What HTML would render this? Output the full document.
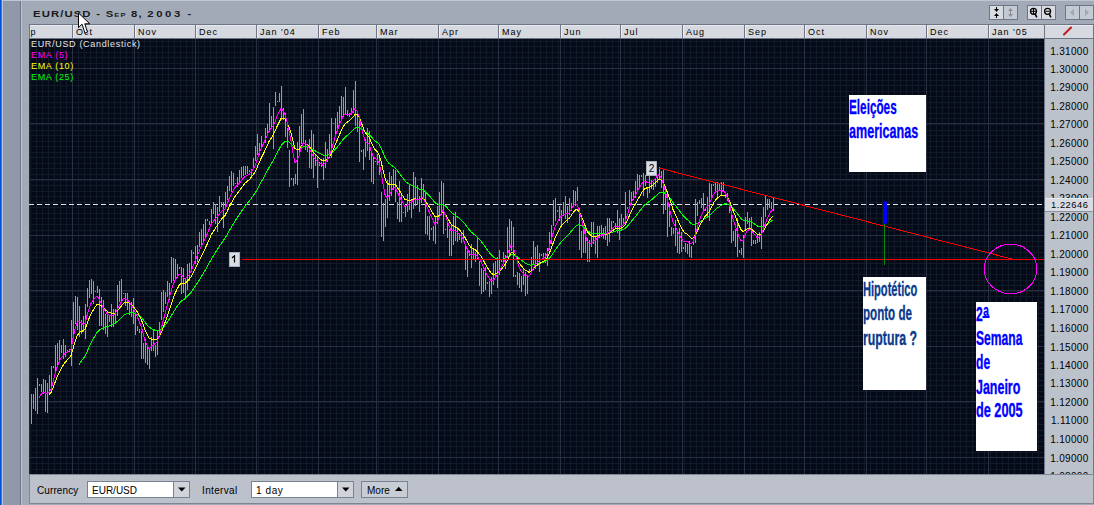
<!DOCTYPE html>
<html><head><meta charset="utf-8">
<style>
*{margin:0;padding:0;box-sizing:border-box}
html,body{width:1094px;height:505px;overflow:hidden;background:#a2aab8;font-family:"Liberation Sans",sans-serif;}
.a{position:absolute}
.hc{position:absolute;top:24px;height:15px;background:#d6dae0;border-top:1px solid #6e7686;border-bottom:1px solid #6e7686;font-size:10px;letter-spacing:0.6px;color:#000;padding-left:3px;line-height:13px}
.sep{position:absolute;top:24px;width:1px;height:15px;background:#6e7686}
.pl{position:absolute;left:1045px;width:43.5px;text-align:right;font-size:10px;letter-spacing:0.3px;line-height:12px;color:#000}
.leg{position:absolute;left:31px;font-size:9px;letter-spacing:0.68px;line-height:11px}
.box{position:absolute;background:#fff}
.bt{position:absolute;-webkit-text-stroke:0.35px currentColor;font-family:"Liberation Sans",sans-serif;font-weight:bold;font-size:20.5px;line-height:24.1px;transform:scaleX(0.59);transform-origin:0 0;white-space:nowrap}
.btn{position:absolute;top:5px;height:15px;border:1px solid #6e7686;}
</style></head><body>
<!-- left frame -->
<div class="a" style="left:0;top:0;width:1px;height:505px;background:#0050e0"></div>
<div class="a" style="left:1px;top:0;width:1px;height:505px;background:#6c7078"></div>
<div class="a" style="left:2px;top:0;width:1px;height:505px;background:#bec5d0"></div>
<div class="a" style="left:3px;top:1px;width:17px;height:504px;background:#8f99a9"></div>
<div class="a" style="left:20px;top:0;width:1px;height:505px;background:#6e7686"></div>
<div class="a" style="left:21px;top:0;width:1px;height:505px;background:#bcc3ce"></div>
<div class="a" style="left:2px;top:0;width:1092px;height:1px;background:#c0c6d0"></div>

<!-- title -->
<div class="a" style="left:33px;top:9px;font-size:9.2px;line-height:11px;font-weight:bold;font-variant:small-caps;letter-spacing:0.9px;word-spacing:0.3px;color:#1a1a1a;transform:scaleX(1.23);transform-origin:0 0;white-space:nowrap">EUR/USD - Sep 8, <span style="letter-spacing:2.1px">2003</span> -</div>

<!-- toolbar buttons -->
<div class="btn" style="left:989px;width:29px;background:#c4cad4"></div>
<div class="a" style="left:990px;top:6px;width:13px;height:13px;background:#d8dce2"></div>
<div class="a" style="left:1003px;top:5px;width:1px;height:15px;background:#6e7686"></div>
<div class="btn" style="left:1027px;width:29px;background:#d8dce2"></div>
<div class="a" style="left:1041px;top:5px;width:1px;height:15px;background:#6e7686"></div>
<div class="btn" style="left:1065px;width:29px;background:#c4cad4"></div>
<div class="a" style="left:1079px;top:5px;width:1px;height:15px;background:#6e7686"></div>
<svg class="a" style="left:0;top:0" width="1094" height="30">
<g fill="#000"><rect x="996" y="7" width="1" height="4"/><path d="M994 9h5l-2.5 3z"/><path d="M994 16h5l-2.5-3z"/><rect x="996" y="15" width="1" height="3"/></g>
<g fill="#909090"><rect x="1010" y="9" width="1" height="7"/><path d="M1008 11h5l-2.5-3z"/><path d="M1008 14h5l-2.5 3z"/></g>
<g fill="none" stroke="#000" stroke-width="1.3"><circle cx="1033.5" cy="11.3" r="3"/><circle cx="1047.6" cy="11.3" r="3"/></g>
<g stroke="#000" stroke-width="1"><path d="M1033.5 8.5v5.5M1030.8 11.3h5.5M1045.5 11.3h4.3"/></g>
<g stroke="#000" stroke-width="1.6"><path d="M1035.2 14l1.6 3.3M1049.3 14l1.6 3.3"/></g>
<g fill="#a0a8b4"><path d="M1070 12.5l4-3.8v7.6z"/><path d="M1089 12.5l-4-3.8v7.6z"/></g>
</svg>

<!-- header row -->
<div class="a" style="left:29px;top:24px;width:1065px;height:15px;background:#d6dae0;border-top:1px solid #6e7686;border-bottom:1px solid #6e7686;border-left:1px solid #6e7686;border-right:1px solid #6e7686"></div>
<div class="a" style="left:30px;top:25px;width:1063px;height:1px;background:#e6e9ee"></div>
<div class="a" style="left:30px;top:26.5px;font-size:9px;letter-spacing:1px;line-height:11px;width:42px;overflow:hidden;white-space:nowrap"><span style="position:relative;left:-12.5px">Sep</span></div>
<div class="a" style="left:72px;top:25px;width:1px;height:13px;background:#6e7686"></div>
<div class="a" style="left:73px;top:25px;width:1px;height:13px;background:#eceef2"></div>
<div class="a" style="left:76px;top:26.5px;font-size:9px;letter-spacing:1px;line-height:11px;white-space:nowrap">Oct</div>
<div class="a" style="left:134px;top:25px;width:1px;height:13px;background:#6e7686"></div>
<div class="a" style="left:135px;top:25px;width:1px;height:13px;background:#eceef2"></div>
<div class="a" style="left:138px;top:26.5px;font-size:9px;letter-spacing:1px;line-height:11px;white-space:nowrap">Nov</div>
<div class="a" style="left:195px;top:25px;width:1px;height:13px;background:#6e7686"></div>
<div class="a" style="left:196px;top:25px;width:1px;height:13px;background:#eceef2"></div>
<div class="a" style="left:199px;top:26.5px;font-size:9px;letter-spacing:1px;line-height:11px;white-space:nowrap">Dec</div>
<div class="a" style="left:256px;top:25px;width:1px;height:13px;background:#6e7686"></div>
<div class="a" style="left:257px;top:25px;width:1px;height:13px;background:#eceef2"></div>
<div class="a" style="left:260px;top:26.5px;font-size:9px;letter-spacing:1px;line-height:11px;white-space:nowrap">Jan '04</div>
<div class="a" style="left:318px;top:25px;width:1px;height:13px;background:#6e7686"></div>
<div class="a" style="left:319px;top:25px;width:1px;height:13px;background:#eceef2"></div>
<div class="a" style="left:322px;top:26.5px;font-size:9px;letter-spacing:1px;line-height:11px;white-space:nowrap">Feb</div>
<div class="a" style="left:376px;top:25px;width:1px;height:13px;background:#6e7686"></div>
<div class="a" style="left:377px;top:25px;width:1px;height:13px;background:#eceef2"></div>
<div class="a" style="left:380px;top:26.5px;font-size:9px;letter-spacing:1px;line-height:11px;white-space:nowrap">Mar</div>
<div class="a" style="left:438px;top:25px;width:1px;height:13px;background:#6e7686"></div>
<div class="a" style="left:439px;top:25px;width:1px;height:13px;background:#eceef2"></div>
<div class="a" style="left:442px;top:26.5px;font-size:9px;letter-spacing:1px;line-height:11px;white-space:nowrap">Apr</div>
<div class="a" style="left:498px;top:25px;width:1px;height:13px;background:#6e7686"></div>
<div class="a" style="left:499px;top:25px;width:1px;height:13px;background:#eceef2"></div>
<div class="a" style="left:502px;top:26.5px;font-size:9px;letter-spacing:1px;line-height:11px;white-space:nowrap">May</div>
<div class="a" style="left:560px;top:25px;width:1px;height:13px;background:#6e7686"></div>
<div class="a" style="left:561px;top:25px;width:1px;height:13px;background:#eceef2"></div>
<div class="a" style="left:564px;top:26.5px;font-size:9px;letter-spacing:1px;line-height:11px;white-space:nowrap">Jun</div>
<div class="a" style="left:620px;top:25px;width:1px;height:13px;background:#6e7686"></div>
<div class="a" style="left:621px;top:25px;width:1px;height:13px;background:#eceef2"></div>
<div class="a" style="left:624px;top:26.5px;font-size:9px;letter-spacing:1px;line-height:11px;white-space:nowrap">Jul</div>
<div class="a" style="left:682px;top:25px;width:1px;height:13px;background:#6e7686"></div>
<div class="a" style="left:683px;top:25px;width:1px;height:13px;background:#eceef2"></div>
<div class="a" style="left:686px;top:26.5px;font-size:9px;letter-spacing:1px;line-height:11px;white-space:nowrap">Aug</div>
<div class="a" style="left:744px;top:25px;width:1px;height:13px;background:#6e7686"></div>
<div class="a" style="left:745px;top:25px;width:1px;height:13px;background:#eceef2"></div>
<div class="a" style="left:748px;top:26.5px;font-size:9px;letter-spacing:1px;line-height:11px;white-space:nowrap">Sep</div>
<div class="a" style="left:804px;top:25px;width:1px;height:13px;background:#6e7686"></div>
<div class="a" style="left:805px;top:25px;width:1px;height:13px;background:#eceef2"></div>
<div class="a" style="left:808px;top:26.5px;font-size:9px;letter-spacing:1px;line-height:11px;white-space:nowrap">Oct</div>
<div class="a" style="left:866px;top:25px;width:1px;height:13px;background:#6e7686"></div>
<div class="a" style="left:867px;top:25px;width:1px;height:13px;background:#eceef2"></div>
<div class="a" style="left:870px;top:26.5px;font-size:9px;letter-spacing:1px;line-height:11px;white-space:nowrap">Nov</div>
<div class="a" style="left:926px;top:25px;width:1px;height:13px;background:#6e7686"></div>
<div class="a" style="left:927px;top:25px;width:1px;height:13px;background:#eceef2"></div>
<div class="a" style="left:930px;top:26.5px;font-size:9px;letter-spacing:1px;line-height:11px;white-space:nowrap">Dec</div>
<div class="a" style="left:988px;top:25px;width:1px;height:13px;background:#6e7686"></div>
<div class="a" style="left:989px;top:25px;width:1px;height:13px;background:#eceef2"></div>
<div class="a" style="left:992px;top:26.5px;font-size:9px;letter-spacing:1px;line-height:11px;white-space:nowrap">Jan '05</div>
<div class="a" style="left:1044px;top:25px;width:1px;height:13px;background:#6e7686"></div>

<!-- chart -->
<svg class="a" style="left:0;top:0" width="1094" height="505">
<rect x="29" y="39" width="1015" height="435" fill="#050a19"/><rect x="29" y="39" width="1" height="435" fill="#1e2433"/>
<path d="M30.5 39V474M36.5 39V474M42.5 39V474M48.5 39V474M54.5 39V474M60.5 39V474M66.5 39V474M72.5 39V474M78.5 39V474M84.5 39V474M90.5 39V474M96.5 39V474M102.5 39V474M108.5 39V474M114.5 39V474M120.5 39V474M126.5 39V474M132.5 39V474M138.5 39V474M144.5 39V474M150.5 39V474M156.5 39V474M162.5 39V474M168.5 39V474M174.5 39V474M180.5 39V474M186.5 39V474M192.5 39V474M198.5 39V474M204.5 39V474M210.5 39V474M216.5 39V474M222.5 39V474M228.5 39V474M234.5 39V474M240.5 39V474M246.5 39V474M252.5 39V474M258.5 39V474M264.5 39V474M270.5 39V474M276.5 39V474M282.5 39V474M288.5 39V474M294.5 39V474M300.5 39V474M306.5 39V474M312.5 39V474M318.5 39V474M324.5 39V474M330.5 39V474M336.5 39V474M342.5 39V474M348.5 39V474M354.5 39V474M360.5 39V474M366.5 39V474M372.5 39V474M378.5 39V474M384.5 39V474M390.5 39V474M396.5 39V474M402.5 39V474M408.5 39V474M414.5 39V474M420.5 39V474M426.5 39V474M432.5 39V474M438.5 39V474M444.5 39V474M450.5 39V474M456.5 39V474M462.5 39V474M468.5 39V474M474.5 39V474M480.5 39V474M486.5 39V474M492.5 39V474M498.5 39V474M504.5 39V474M510.5 39V474M516.5 39V474M522.5 39V474M528.5 39V474M534.5 39V474M540.5 39V474M546.5 39V474M552.5 39V474M558.5 39V474M564.5 39V474M570.5 39V474M576.5 39V474M582.5 39V474M588.5 39V474M594.5 39V474M600.5 39V474M606.5 39V474M612.5 39V474M618.5 39V474M624.5 39V474M630.5 39V474M636.5 39V474M642.5 39V474M648.5 39V474M654.5 39V474M660.5 39V474M666.5 39V474M672.5 39V474M678.5 39V474M684.5 39V474M690.5 39V474M696.5 39V474M702.5 39V474M708.5 39V474M714.5 39V474M720.5 39V474M726.5 39V474M732.5 39V474M738.5 39V474M744.5 39V474M750.5 39V474M756.5 39V474M762.5 39V474M768.5 39V474M774.5 39V474M780.5 39V474M786.5 39V474M792.5 39V474M798.5 39V474M804.5 39V474M810.5 39V474M816.5 39V474M822.5 39V474M828.5 39V474M834.5 39V474M840.5 39V474M846.5 39V474M852.5 39V474M858.5 39V474M864.5 39V474M870.5 39V474M876.5 39V474M882.5 39V474M888.5 39V474M894.5 39V474M900.5 39V474M906.5 39V474M912.5 39V474M918.5 39V474M924.5 39V474M930.5 39V474M936.5 39V474M942.5 39V474M948.5 39V474M954.5 39V474M960.5 39V474M966.5 39V474M972.5 39V474M978.5 39V474M984.5 39V474M990.5 39V474M996.5 39V474M1002.5 39V474M1008.5 39V474M1014.5 39V474M1020.5 39V474M1026.5 39V474M1032.5 39V474M1038.5 39V474M30 41.5H1044M30 46.5H1044M30 52.5H1044M30 57.5H1044M30 63.5H1044M30 68.5H1044M30 74.5H1044M30 80.5H1044M30 85.5H1044M30 91.5H1044M30 96.5H1044M30 102.5H1044M30 107.5H1044M30 113.5H1044M30 118.5H1044M30 124.5H1044M30 130.5H1044M30 135.5H1044M30 141.5H1044M30 146.5H1044M30 152.5H1044M30 157.5H1044M30 163.5H1044M30 168.5H1044M30 174.5H1044M30 180.5H1044M30 185.5H1044M30 191.5H1044M30 196.5H1044M30 202.5H1044M30 207.5H1044M30 213.5H1044M30 218.5H1044M30 224.5H1044M30 230.5H1044M30 235.5H1044M30 241.5H1044M30 246.5H1044M30 252.5H1044M30 257.5H1044M30 263.5H1044M30 268.5H1044M30 274.5H1044M30 280.5H1044M30 285.5H1044M30 291.5H1044M30 296.5H1044M30 302.5H1044M30 307.5H1044M30 313.5H1044M30 318.5H1044M30 324.5H1044M30 330.5H1044M30 335.5H1044M30 341.5H1044M30 346.5H1044M30 352.5H1044M30 357.5H1044M30 363.5H1044M30 368.5H1044M30 374.5H1044M30 380.5H1044M30 385.5H1044M30 391.5H1044M30 396.5H1044M30 402.5H1044M30 407.5H1044M30 413.5H1044M30 418.5H1044M30 424.5H1044M30 430.5H1044M30 435.5H1044M30 441.5H1044M30 446.5H1044M30 452.5H1044M30 457.5H1044M30 463.5H1044M30 469.5H1044" stroke="#121927" stroke-width="1" fill="none"/>
<path d="M72.5 39V474M134.5 39V474M195.5 39V474M256.5 39V474M318.5 39V474M376.5 39V474M438.5 39V474M498.5 39V474M560.5 39V474M620.5 39V474M682.5 39V474M744.5 39V474M804.5 39V474M866.5 39V474M926.5 39V474M988.5 39V474M30 68.5H1044M30 123.5H1044M30 179.5H1044M30 235.5H1044M30 290.5H1044M30 346.5H1044M30 401.5H1044M30 457.5H1044" stroke="#283042" stroke-width="1" fill="none"/>
<path d="M29 204.5H1044" stroke="#d8e0f0" stroke-width="1" stroke-dasharray="5 3"/>
<path d="M31.5 394V424M33.5 394V409M35.5 388V411M37.5 378V414M39.5 384V386M41.5 384V392M43.5 379V394M45.5 380V412M47.5 383V413M49.5 375V395M51.5 366V388M53.5 366V368M55.5 345V371M57.5 343V365M59.5 340V363M61.5 345V353M63.5 339V359M65.5 345V357M67.5 350V351M69.5 349V352M71.5 320V366M73.5 302V335M75.5 296V324M77.5 297V330M79.5 306V337M81.5 320V334M83.5 316V332M85.5 304V339M87.5 288V307M89.5 280V298M91.5 279V294M93.5 281V304M95.5 291V292M97.5 286V293M99.5 289V326M101.5 297V326M103.5 300V330M105.5 314V334M107.5 312V337M109.5 315V322M111.5 304V327M113.5 309V327M115.5 309V323M117.5 285V316M119.5 281V302M121.5 279V302M123.5 293V294M125.5 293V306M127.5 293V310M129.5 302V315M131.5 302V317M133.5 298V324M135.5 312V335M137.5 326V331M139.5 329V333M141.5 331V359M143.5 343V359M145.5 339V363M147.5 347V365M149.5 349V369M151.5 337V351M153.5 329V351M155.5 345V357M157.5 331V355M159.5 322V337M161.5 292V320M163.5 290V312M165.5 292V304M167.5 281V297M169.5 283V300M171.5 257V283M173.5 258V281M175.5 259V280M177.5 264V278M179.5 267V269M181.5 267V294M183.5 268V293M185.5 278V297M187.5 264V290M189.5 263V281M191.5 250V269M193.5 252V254M195.5 246V264M197.5 245V262M199.5 232V247M201.5 229V246M203.5 224V243M205.5 219V239M207.5 219V221M209.5 221V225M211.5 209V223M213.5 202V214M215.5 204V224M217.5 207V232M219.5 196V212M221.5 202V207M223.5 202V228M225.5 192V207M227.5 186V200M229.5 176V191M231.5 171V192M233.5 173V186M235.5 183V184M237.5 177V187M239.5 170V182M241.5 167V178M243.5 166V176M245.5 166V175M247.5 166V174M249.5 170V172M251.5 169V176M253.5 158V169M255.5 146V161M257.5 134V155M259.5 143V155M261.5 136V147M263.5 144V145M265.5 128V143M267.5 124V136M269.5 103V132M271.5 116V128M273.5 107V149M275.5 92V106M277.5 101V102M279.5 93V102M281.5 86V120M283.5 108V120M285.5 113V137M287.5 128V148M289.5 150V187M291.5 178V180M293.5 178V186M295.5 174V184M297.5 142V185M299.5 126V156M301.5 114V144M303.5 109V144M305.5 140V150M307.5 144V152M309.5 139V168M311.5 130V169M313.5 134V178M315.5 154V166M317.5 156V188M319.5 162V166M321.5 162V167M323.5 158V180M325.5 142V168M327.5 149V162M329.5 134V154M331.5 118V158M333.5 123V124M335.5 118V136M337.5 112V132M339.5 106V126M341.5 96V120M343.5 97V117M345.5 87V115M347.5 110V116M349.5 113V117M351.5 108V115M353.5 90V113M355.5 81V126M357.5 116V132M359.5 117V162M361.5 150V152M363.5 149V170M365.5 139V157M367.5 128V151M369.5 131V160M371.5 151V182M373.5 156V184M375.5 161V162M377.5 154V165M379.5 156V175M381.5 192V237M383.5 203V241M385.5 199V227M387.5 180V218M389.5 172V201M391.5 176V196M393.5 169V190M395.5 170V202M397.5 202V219M399.5 181V222M401.5 193V222M403.5 212V213M405.5 207V217M407.5 194V212M409.5 185V210M411.5 199V218M413.5 172V209M415.5 177V206M417.5 185V205M419.5 196V212M421.5 178V203M423.5 184V200M425.5 191V234M427.5 216V235M429.5 216V240M431.5 228V230M433.5 226V241M435.5 216V244M437.5 206V224M439.5 192V218M441.5 181V215M443.5 183V234M445.5 229V230M447.5 222V238M449.5 229V256M451.5 225V256M453.5 216V245M455.5 212V241M457.5 227V242M459.5 235V240M461.5 233V243M463.5 230V241M465.5 245V270M467.5 250V277M469.5 251V256M471.5 244V268M473.5 249V260M475.5 252V262M477.5 238V260M479.5 261V286M481.5 268V294M483.5 270V292M485.5 267V290M487.5 282V284M489.5 281V297M491.5 277V294M493.5 263V285M495.5 261V276M497.5 257V288M499.5 250V275M501.5 259V262M503.5 252V264M505.5 255V269M507.5 227V258M509.5 219V256M511.5 221V251M513.5 227V277M515.5 275V277M517.5 272V285M519.5 273V288M521.5 276V292M523.5 269V285M525.5 272V296M527.5 276V294M529.5 269V272M531.5 257V272M533.5 241V265M535.5 247V269M537.5 245V264M539.5 253V272M541.5 254V256M543.5 253V259M545.5 253V263M547.5 248V266M549.5 232V250M551.5 225V244M553.5 200V226M555.5 198V221M557.5 210V212M559.5 206V221M561.5 210V225M563.5 202V216M565.5 196V219M567.5 206V223M569.5 198V215M571.5 203V211M573.5 190V207M575.5 191V206M577.5 187V201M579.5 208V250M581.5 231V258M583.5 226V253M585.5 226V253M587.5 238V262M589.5 240V262M591.5 222V247M593.5 222V244M595.5 236V254M597.5 226V258M599.5 226V238M601.5 225V237M603.5 228V239M605.5 226V240M607.5 218V246M609.5 218V242M611.5 221V230M613.5 221V223M615.5 223V229M617.5 210V233M619.5 218V240M621.5 214V231M623.5 218V225M625.5 192V224M627.5 207V209M629.5 190V204M631.5 192V205M633.5 191V200M635.5 181V198M637.5 174V190M639.5 175V187M641.5 175V177M643.5 173V196M645.5 175V186M647.5 188V198M649.5 176V193M651.5 180V189M653.5 182V190M655.5 178V187M657.5 177V183M659.5 167V180M661.5 171V188M663.5 169V214M665.5 188V210M667.5 193V237M669.5 205V227M671.5 227V236M673.5 228V234M675.5 220V246M677.5 230V253M679.5 228V254M681.5 232V252M683.5 247V249M685.5 243V252M687.5 244V254M689.5 241V257M691.5 246V258M693.5 241V245M695.5 199V243M697.5 202V216M699.5 200V204M701.5 198V208M703.5 193V211M705.5 209V211M707.5 197V218M709.5 183V221M711.5 184V200M713.5 184V186M715.5 182V192M717.5 182V197M719.5 183V191M721.5 182V196M723.5 182V192M725.5 196V198M727.5 193V201M729.5 202V213M731.5 211V243M733.5 231V241M735.5 229V247M737.5 218V257M739.5 250V253M741.5 248V255M743.5 235V258M745.5 217V231M747.5 212V224M749.5 218V229M751.5 217V246M753.5 240V244M755.5 240V244M757.5 234V243M759.5 232V242M761.5 217V249M763.5 207V228M765.5 196V217M767.5 199V210M769.5 199V208M771.5 202V209M773.5 198V211" stroke="#9a9aa2" stroke-width="1" fill="none" shape-rendering="crispEdges"/>
<polyline points="79,364.4 81,361.4 83,358.9 85,356.0 87,351.7 89,347.3 91,343.2 93,339.4 95,335.8 97,332.5 99,330.3 101,328.8 103,327.9 105,327.1 107,326.5 109,325.9 111,325.0 113,324.3 115,323.3 117,321.7 119,319.9 121,318.0 123,316.0 125,314.5 127,313.5 129,312.9 131,312.8 133,313.0 135,313.5 137,314.3 139,315.5 141,317.2 143,319.4 145,322.2 147,324.7 149,327.1 151,328.4 153,329.4 155,330.2 157,330.9 159,330.4 161,329.3 163,327.5 165,325.2 167,322.6 169,319.6 171,316.4 173,312.9 175,309.7 177,306.6 179,303.7 181,301.5 183,300.0 185,298.6 187,296.7 189,294.7 191,292.4 193,289.5 195,286.6 197,283.5 199,280.4 201,277.1 203,273.9 205,270.6 207,267.1 209,263.4 211,259.7 213,256.4 215,253.1 217,250.0 219,246.8 221,243.8 223,241.0 225,238.3 227,234.9 229,231.3 231,227.9 233,224.4 235,221.1 237,218.0 239,215.1 241,212.1 243,209.1 245,206.3 247,203.8 249,201.4 251,198.7 253,196.0 255,193.2 257,189.7 259,185.9 261,182.3 263,178.8 265,175.2 267,171.4 269,167.6 271,164.2 273,160.9 275,157.3 277,153.3 279,149.5 281,145.8 283,143.4 285,141.7 287,141.5 289,142.1 291,143.5 293,146.0 295,148.8 297,149.3 299,149.2 301,148.0 303,146.9 305,146.5 307,146.6 309,147.3 311,148.2 313,149.5 315,150.7 317,151.8 319,153.0 321,154.0 323,155.0 325,155.3 327,155.2 329,154.8 331,153.7 333,151.9 335,149.7 337,147.4 339,144.8 341,142.2 343,139.5 345,137.3 347,135.6 349,134.1 351,132.3 353,130.3 355,128.2 357,127.3 359,127.2 361,128.5 363,130.2 365,132.1 367,133.3 369,134.2 371,136.5 373,138.8 375,140.8 377,142.3 379,144.3 381,147.9 383,152.5 385,157.4 387,161.1 389,163.3 391,165.0 393,166.3 395,167.7 397,170.2 399,172.8 401,175.4 403,178.1 405,180.9 407,182.6 409,184.0 411,185.2 413,186.1 415,186.8 417,187.9 419,188.9 421,189.4 423,189.9 425,191.5 427,193.4 429,195.5 431,197.8 433,200.2 435,202.7 437,203.8 439,204.3 441,204.4 443,204.3 445,205.7 447,207.6 449,209.9 451,212.3 453,213.7 455,215.1 457,216.6 459,218.1 461,219.9 463,221.8 465,224.2 467,226.8 469,229.4 471,231.8 473,233.5 475,235.1 477,236.9 479,239.0 481,241.2 483,243.8 485,246.6 487,249.4 489,252.2 491,254.6 493,256.7 495,257.9 497,258.8 499,259.2 501,259.4 503,259.1 505,258.6 507,257.7 509,256.3 511,254.5 513,254.4 515,255.2 517,256.6 519,258.6 521,260.0 523,261.4 525,262.8 527,263.9 529,264.9 531,265.1 533,264.8 535,264.1 537,263.7 539,263.2 541,262.7 543,262.2 545,261.6 547,260.6 549,258.7 551,256.1 553,253.3 555,250.2 557,247.5 559,244.8 561,242.2 563,239.8 565,237.8 567,235.8 569,233.9 571,231.6 573,229.2 575,226.8 577,225.1 579,224.9 581,225.4 583,226.6 585,228.4 587,230.6 589,231.7 591,232.7 593,233.2 595,233.5 597,233.6 599,233.5 601,233.6 603,233.5 605,233.5 607,233.3 609,233.1 611,232.6 613,231.9 615,231.1 617,230.9 619,230.7 621,230.2 623,229.7 625,228.5 627,226.6 629,224.3 631,221.7 633,219.4 635,217.0 637,214.6 639,212.0 641,209.4 643,206.8 645,204.6 647,203.2 649,201.7 651,200.3 653,198.5 655,196.7 657,194.8 659,192.9 661,192.2 663,192.2 665,193.2 667,194.8 669,197.1 671,199.6 673,202.5 675,204.9 677,207.4 679,210.2 681,212.9 683,215.5 685,217.6 687,219.3 689,221.3 691,223.3 693,224.4 695,224.4 697,223.6 699,222.4 701,221.0 703,219.8 705,218.4 707,217.4 709,216.1 711,214.0 713,211.8 715,209.9 717,208.2 719,206.8 721,205.5 723,204.6 725,203.8 727,203.9 729,204.6 731,206.4 733,208.6 735,210.7 737,213.3 739,216.0 741,218.5 743,220.2 745,220.6 747,220.7 749,221.2 751,221.9 753,223.1 755,224.4 757,225.8 759,226.6 761,227.0 763,226.4 765,225.5 767,224.1 769,222.7 771,221.4 773,220.1" fill="none" stroke="#00ff00" stroke-width="1" shape-rendering="crispEdges"/>
<polyline points="49,394.5 51,392.6 53,388.0 55,382.5 57,377.4 59,372.8 61,368.7 63,365.4 65,362.5 67,360.2 69,358.0 71,355.7 73,348.8 75,341.7 77,336.2 79,332.7 81,331.4 83,330.9 85,329.2 87,323.8 89,318.6 91,314.0 93,310.4 95,307.2 97,304.5 99,304.5 101,305.7 103,307.7 105,309.6 107,311.2 109,312.5 111,313.0 113,313.4 115,313.0 117,311.1 119,308.8 121,306.4 123,303.7 125,302.4 127,302.3 129,302.8 131,304.4 133,306.4 135,308.8 137,311.6 139,315.0 141,319.0 143,324.0 145,329.7 147,334.2 149,338.2 151,339.1 153,339.6 155,339.8 157,339.6 159,336.8 161,333.2 163,328.1 165,322.6 167,316.9 169,310.9 171,304.9 173,298.7 175,293.6 177,289.3 179,285.6 181,283.7 183,283.3 185,283.2 187,281.5 189,279.4 191,276.8 193,272.9 195,269.1 197,264.9 199,260.8 201,256.7 203,252.7 205,248.8 207,244.5 209,240.0 211,235.3 213,232.0 215,228.8 217,225.7 219,222.7 221,219.8 223,217.6 225,215.5 227,211.7 229,207.4 231,203.6 233,199.8 235,196.4 237,193.7 239,191.2 241,188.5 243,185.7 245,183.3 247,181.5 249,179.9 251,177.6 253,174.9 255,172.2 257,167.7 259,162.8 261,158.5 263,154.5 265,150.4 267,146.0 269,141.6 271,138.4 273,135.2 275,131.3 277,126.6 279,122.5 281,118.6 283,117.9 285,118.6 287,122.2 289,127.1 291,133.2 293,141.0 295,148.5 297,149.8 299,149.5 301,146.6 303,144.1 305,143.7 307,144.6 309,146.4 311,148.9 313,151.7 315,154.2 317,156.2 319,158.1 321,159.6 323,161.0 325,160.7 327,159.4 329,157.8 331,154.6 333,150.1 335,145.3 337,140.6 339,135.7 341,131.3 343,126.9 345,123.9 347,122.4 349,121.1 351,119.3 353,117.0 355,114.4 357,114.7 359,116.8 361,121.9 363,127.0 365,132.2 367,134.8 369,136.9 371,141.8 373,146.2 375,149.6 377,151.5 379,154.7 381,161.3 383,169.7 385,178.1 387,183.1 389,184.3 391,184.5 393,184.0 395,184.2 397,187.0 399,190.0 401,193.2 403,196.3 405,199.5 407,200.1 409,200.3 411,200.1 413,199.6 415,198.8 417,199.2 419,199.5 421,198.9 423,198.1 425,200.6 427,203.5 429,206.6 431,210.0 433,213.4 435,216.9 437,216.9 439,215.7 441,214.0 443,211.9 445,213.9 447,216.8 449,220.6 451,224.3 453,225.5 455,226.6 457,228.0 459,229.4 461,231.7 463,234.0 465,237.6 467,241.2 469,244.7 471,247.6 473,248.8 475,249.7 477,251.5 479,253.7 481,256.2 483,259.7 485,263.4 487,266.9 489,270.3 491,272.8 493,274.4 495,274.1 497,273.2 499,271.6 501,269.7 503,267.3 505,264.5 507,261.4 509,257.3 511,253.0 513,252.8 515,255.0 517,258.5 519,262.7 521,265.5 523,267.8 525,269.9 527,271.2 529,272.3 531,271.4 533,269.4 535,267.0 537,265.5 539,263.9 541,262.7 543,261.6 545,260.1 547,258.1 549,254.2 551,248.8 553,243.5 555,238.0 557,233.8 559,229.9 561,226.5 563,223.7 565,221.8 567,220.0 569,218.5 571,215.8 573,212.9 575,210.3 577,209.3 579,211.6 581,215.2 583,220.0 585,225.4 587,231.1 589,233.7 591,235.7 593,236.4 595,236.5 597,236.1 599,235.5 601,235.2 603,234.9 605,234.4 607,233.9 609,233.3 611,232.1 613,230.4 615,229.0 617,228.7 619,228.6 621,227.9 623,227.1 625,224.9 627,221.1 629,216.6 631,211.8 633,208.2 635,204.6 637,201.0 639,197.5 641,193.9 643,190.7 645,188.4 647,187.9 649,187.3 651,186.5 653,184.8 655,182.9 657,180.9 659,179.1 661,179.8 663,182.2 665,186.3 667,191.4 669,197.3 671,203.3 673,209.4 675,213.8 677,218.2 679,222.7 681,226.8 683,230.6 685,232.8 687,234.1 689,236.1 691,238.1 693,238.0 695,235.5 697,231.5 699,227.4 701,223.2 703,219.8 705,216.6 707,214.5 709,211.9 711,207.7 713,203.8 715,200.7 717,198.4 719,196.8 721,195.6 723,195.1 725,195.0 727,196.9 729,199.8 731,205.0 733,210.5 735,215.0 737,220.5 739,225.5 741,229.6 743,231.6 745,230.4 747,229.0 749,228.6 751,229.0 753,230.5 755,232.2 757,234.1 759,234.5 761,234.1 763,231.4 765,228.2 767,224.5 769,221.1 771,218.2 773,215.8" fill="none" stroke="#ffff00" stroke-width="1" shape-rendering="crispEdges"/>
<polyline points="39,398.3 41,394.4 43,392.4 45,392.8 47,393.6 49,392.4 51,389.5 53,382.1 55,373.9 57,367.5 59,362.5 61,358.3 63,355.8 65,353.7 67,352.3 69,350.9 71,349.1 73,338.6 75,329.0 77,323.1 79,321.2 81,322.5 83,324.6 85,323.6 87,315.5 89,308.8 91,303.6 93,300.5 95,297.9 97,296.1 99,298.8 101,302.9 103,307.5 105,311.0 107,313.5 109,315.1 111,315.1 113,315.1 115,313.8 117,310.1 119,306.3 121,302.6 123,299.0 125,298.2 127,299.5 129,301.3 131,304.7 133,308.2 135,312.1 137,316.2 139,320.8 141,326.1 143,332.9 145,340.4 147,345.1 149,348.7 151,347.0 153,345.3 155,343.6 157,342.0 159,336.1 161,329.7 163,321.5 165,313.7 167,306.2 169,298.8 171,291.8 173,284.7 175,280.2 177,276.7 179,274.2 181,274.4 183,276.9 185,278.7 187,277.1 189,274.8 191,271.5 193,266.1 195,261.4 197,256.3 199,251.7 201,247.1 203,243.1 205,239.1 207,234.5 209,229.5 211,224.4 213,221.9 215,219.4 217,216.9 219,214.4 221,211.9 223,210.4 225,209.0 227,204.1 229,198.9 231,194.8 233,190.7 235,187.5 237,185.6 239,183.6 241,181.2 243,178.6 245,176.5 247,175.5 249,174.5 251,172.1 253,169.0 255,166.0 257,159.9 259,153.5 261,148.7 263,144.6 265,140.4 267,135.7 269,131.1 271,128.6 273,126.1 275,121.9 277,116.4 279,112.3 281,108.6 283,110.6 285,114.4 287,122.3 289,131.2 291,141.1 293,152.7 295,162.6 297,160.2 299,156.2 301,148.6 303,143.4 305,143.0 307,144.8 309,148.1 311,152.0 313,156.1 315,159.2 317,161.2 319,163.1 321,164.2 323,165.2 325,163.2 327,160.0 329,156.8 331,151.3 333,144.2 335,137.4 337,131.5 339,125.5 341,120.8 343,116.3 345,114.2 347,114.7 349,115.0 351,113.7 353,111.4 355,108.4 357,111.1 359,116.1 361,125.6 363,133.7 365,141.0 367,142.9 369,143.9 371,150.6 373,155.8 375,158.7 377,159.2 379,162.5 381,172.0 383,183.9 385,194.6 387,198.2 389,195.3 391,192.0 393,188.6 395,187.5 397,191.5 399,195.5 401,199.6 403,203.2 405,206.6 407,205.4 409,204.0 411,202.4 413,200.6 415,198.9 417,199.6 419,200.1 421,198.7 423,197.4 425,202.1 427,206.9 429,211.5 431,216.1 433,220.3 435,224.4 437,222.0 439,218.0 441,214.1 443,210.3 445,214.4 447,219.7 449,225.6 451,230.7 453,230.9 455,231.0 457,232.2 459,233.4 461,236.2 463,239.0 465,243.8 467,248.4 469,252.5 471,255.1 473,254.8 475,254.4 477,256.1 479,258.7 481,261.6 483,266.2 485,270.8 487,274.8 489,278.3 491,280.4 493,280.8 495,278.1 497,275.1 499,271.6 501,268.0 503,264.1 505,260.2 507,255.8 509,250.2 511,244.7 513,247.2 515,253.1 517,260.1 519,267.3 521,270.8 523,273.3 525,275.3 527,275.8 529,276.3 531,273.4 533,269.0 535,264.8 537,262.8 539,260.8 541,259.5 543,258.5 545,256.9 547,254.2 549,248.4 551,240.5 553,233.5 555,226.8 557,222.9 559,219.2 561,216.6 563,214.8 565,214.2 567,213.5 569,212.9 571,209.8 573,206.5 575,203.8 577,204.2 579,210.1 581,217.3 583,225.4 585,233.4 587,241.3 589,242.6 591,243.3 593,242.0 595,240.4 597,238.4 599,236.5 601,235.6 603,234.8 605,234.0 607,233.2 609,232.3 611,230.5 613,227.9 615,226.1 617,226.6 619,227.1 621,226.3 623,225.3 625,221.8 627,215.9 629,209.4 631,203.1 633,199.3 635,195.7 637,192.2 639,188.5 641,185.0 643,182.1 645,180.8 647,182.5 649,183.1 651,183.0 653,181.1 655,178.9 657,176.6 659,174.7 661,177.5 663,182.6 665,190.0 667,198.2 669,206.7 671,214.6 673,221.9 675,225.9 677,229.9 679,234.3 681,238.0 683,241.2 685,241.7 687,241.0 689,242.4 691,243.9 693,241.9 695,236.0 697,228.6 699,222.0 701,216.1 703,212.2 705,208.8 707,207.6 709,205.1 711,199.7 713,195.3 715,192.3 717,191.0 719,190.4 721,190.3 723,191.3 725,192.3 727,196.7 729,202.0 731,210.9 733,218.9 735,224.4 737,231.3 739,236.9 741,240.7 743,240.5 745,235.5 747,231.1 749,229.7 751,230.0 753,232.5 755,235.0 757,237.5 759,237.0 761,235.5 763,230.1 765,224.6 767,219.0 769,214.7 771,211.6 773,209.4" fill="none" stroke="#ff00ff" stroke-width="1" shape-rendering="crispEdges"/>
<path d="M242 259.5H1044" stroke="#ff0000" stroke-width="1"/>
<path d="M659 168L1012 259" stroke="#ff0000" stroke-width="1" shape-rendering="crispEdges"/>
<ellipse cx="1010.6" cy="269" rx="26.3" ry="24.8" fill="none" stroke="#ff00ff" stroke-width="1" shape-rendering="crispEdges"/>
<path d="M884.5 223V265" stroke="#0a8a0a" stroke-width="1"/>
<path d="M885 203V222" stroke="#0000ff" stroke-width="4" stroke-linecap="round"/>
<rect x="229.5" y="252.5" width="10" height="14" fill="#d8dce4" stroke="#a8b0bc"/>
<rect x="646.5" y="161.5" width="10" height="14" fill="#d8dce4" stroke="#a8b0bc"/>
<path d="M234.5 255V262.5M234.5 255.5L232 258" stroke="#000" stroke-width="1.2" fill="none"/>
<text x="651.5" y="171.5" font-family="Liberation Sans" font-size="10" text-anchor="middle" fill="#000">2</text>
</svg>

<!-- legend -->
<div class="leg" style="top:39px;color:#e6e6e6">EUR/USD (Candlestick)</div>
<div class="leg" style="top:50px;color:#ff00ff">EMA (5)</div>
<div class="leg" style="top:60.8px;color:#ffff00">EMA (10)</div>
<div class="leg" style="top:72px;color:#00ff00">EMA (25)</div>

<!-- annotation boxes -->
<div class="box" style="left:849px;top:95px;width:77px;height:77px"></div>
<div class="box" style="left:863px;top:277px;width:63px;height:113px"></div>
<div class="box" style="left:976px;top:302px;width:61px;height:149px"></div>
<div class="bt" style="left:848.5px;top:95.1px;color:#0000ff;transform:scaleX(0.573)">Eleições</div>
<div class="bt" style="left:848.5px;top:119.3px;color:#0000ff;transform:scaleX(0.613)">americanas</div>
<div class="bt" style="left:862.5px;top:277.1px;color:#0a3a8c;transform:scaleX(0.541)">Hipotético</div>
<div class="bt" style="left:862.5px;top:301.0px;color:#0a3a8c;transform:scaleX(0.565)">ponto de</div>
<div class="bt" style="left:862.5px;top:325.5px;color:#0a3a8c;transform:scaleX(0.600)">ruptura ?</div>
<div class="bt" style="left:975.5px;top:302.3px;color:#0000ff;transform:scaleX(0.590)">2<span style="display:inline-block;font-size:17px;line-height:11px;vertical-align:5px;border-bottom:2px solid #0000ff;padding:0 1px">a</span></div>
<div class="bt" style="left:975.5px;top:326.3px;color:#0000ff;transform:scaleX(0.590)">Semana</div>
<div class="bt" style="left:975.5px;top:350.1px;color:#0000ff;transform:scaleX(0.590)">de</div>
<div class="bt" style="left:975.5px;top:374.6px;color:#0000ff;transform:scaleX(0.608)">Janeiro</div>
<div class="bt" style="left:975.5px;top:397.7px;color:#0000ff;transform:scaleX(0.620)">de 2005</div>

<!-- price axis -->
<div class="a" style="left:1044px;top:39px;width:50px;height:435px;background:#bcc2cc;border-left:1px solid #6e7686;border-right:1px solid #6e7686;overflow:hidden">
</div>
<div class="a" style="left:0;top:0;width:1094px;height:474px;overflow:hidden;pointer-events:none">
<div class="pl" style="top:45.5px">1.31000</div>
<div class="pl" style="top:63.5px">1.30000</div>
<div class="pl" style="top:81.5px">1.29000</div>
<div class="pl" style="top:100.5px">1.28000</div>
<div class="pl" style="top:118.5px">1.27000</div>
<div class="pl" style="top:137.5px">1.26000</div>
<div class="pl" style="top:155.5px">1.25000</div>
<div class="pl" style="top:174.5px">1.24000</div>
<div class="pl" style="top:192.5px">1.23000</div>
<div class="pl" style="top:211.5px">1.22000</div>
<div class="pl" style="top:229.5px">1.21000</div>
<div class="pl" style="top:248.5px">1.20000</div>
<div class="pl" style="top:266.5px">1.19000</div>
<div class="pl" style="top:285.5px">1.18000</div>
<div class="pl" style="top:303.5px">1.17000</div>
<div class="pl" style="top:322.5px">1.16000</div>
<div class="pl" style="top:341.5px">1.15000</div>
<div class="pl" style="top:359.5px">1.14000</div>
<div class="pl" style="top:377.5px">1.13000</div>
<div class="pl" style="top:396.5px">1.12000</div>
<div class="pl" style="top:414.5px">1.11000</div>
<div class="pl" style="top:433.5px">1.10000</div>
<div class="pl" style="top:452.5px">1.09000</div>
<div class="pl" style="top:470.8px">1.08000</div>
</div>
<div class="a" style="left:1045px;top:198px;width:48px;height:14px;background:#d8dce2;border-top:1px solid #e8ebf0;border-bottom:1px solid #8a92a0"></div>
<div class="pl" style="top:199px;font-size:9.3px;letter-spacing:0.55px">1.22646</div>
<svg class="a" style="left:1060px;top:24px" width="20" height="15"><path d="M4 10.5L11 3.5" stroke="#c01818" stroke-width="2" stroke-linecap="round"/></svg>

<!-- bottom toolbar -->
<div class="a" style="left:29px;top:474px;width:1065px;height:30px;background:#bcc1cb;border:1px solid #7e8694"></div>
<div class="a" style="left:37px;top:485px;font-size:10px;letter-spacing:0.1px;line-height:11px;color:#000">Currency</div>
<div class="a" style="left:87px;top:481px;width:103px;height:17px;background:#fff;border:1px solid #7a8290"></div>
<div class="a" style="left:92px;top:485px;font-size:10px;line-height:11px;color:#000">EUR/USD</div>
<div class="a" style="left:173px;top:481px;width:17px;height:17px;background:#d0d4da;border:1px solid #7a8290"></div>
<div class="a" style="left:202px;top:485px;font-size:10px;letter-spacing:0.35px;line-height:11px;color:#000">Interval</div>
<div class="a" style="left:251px;top:481px;width:103px;height:17px;background:#fff;border:1px solid #7a8290"></div>
<div class="a" style="left:256px;top:485px;font-size:10px;letter-spacing:0.6px;line-height:11px;color:#000">1 day</div>
<div class="a" style="left:337px;top:481px;width:17px;height:17px;background:#d0d4da;border:1px solid #7a8290"></div>
<div class="a" style="left:361px;top:481px;width:47px;height:17px;background:#c8ccd4;border:1px solid #7a8290"></div>
<div class="a" style="left:367px;top:485px;font-size:10px;line-height:11px;color:#000">More</div>
<svg class="a" style="left:0;top:470px" width="420" height="35"><g fill="#000"><path d="M178 17.5h7.5l-3.75 4z"/><path d="M342 17.5h7.5l-3.75 4z"/><path d="M395 21h7.5l-3.75-4.2z"/></g></svg>

<!-- cursor -->
<svg class="a" style="left:77px;top:12px" width="16" height="24"><path d="M1.5 1V15.6L5 12.2L8 21.2L10.5 20.2L7.8 11.8H12.8Z" fill="#fff" stroke="#000" stroke-width="1" stroke-linejoin="miter"/></svg>
</body></html>
